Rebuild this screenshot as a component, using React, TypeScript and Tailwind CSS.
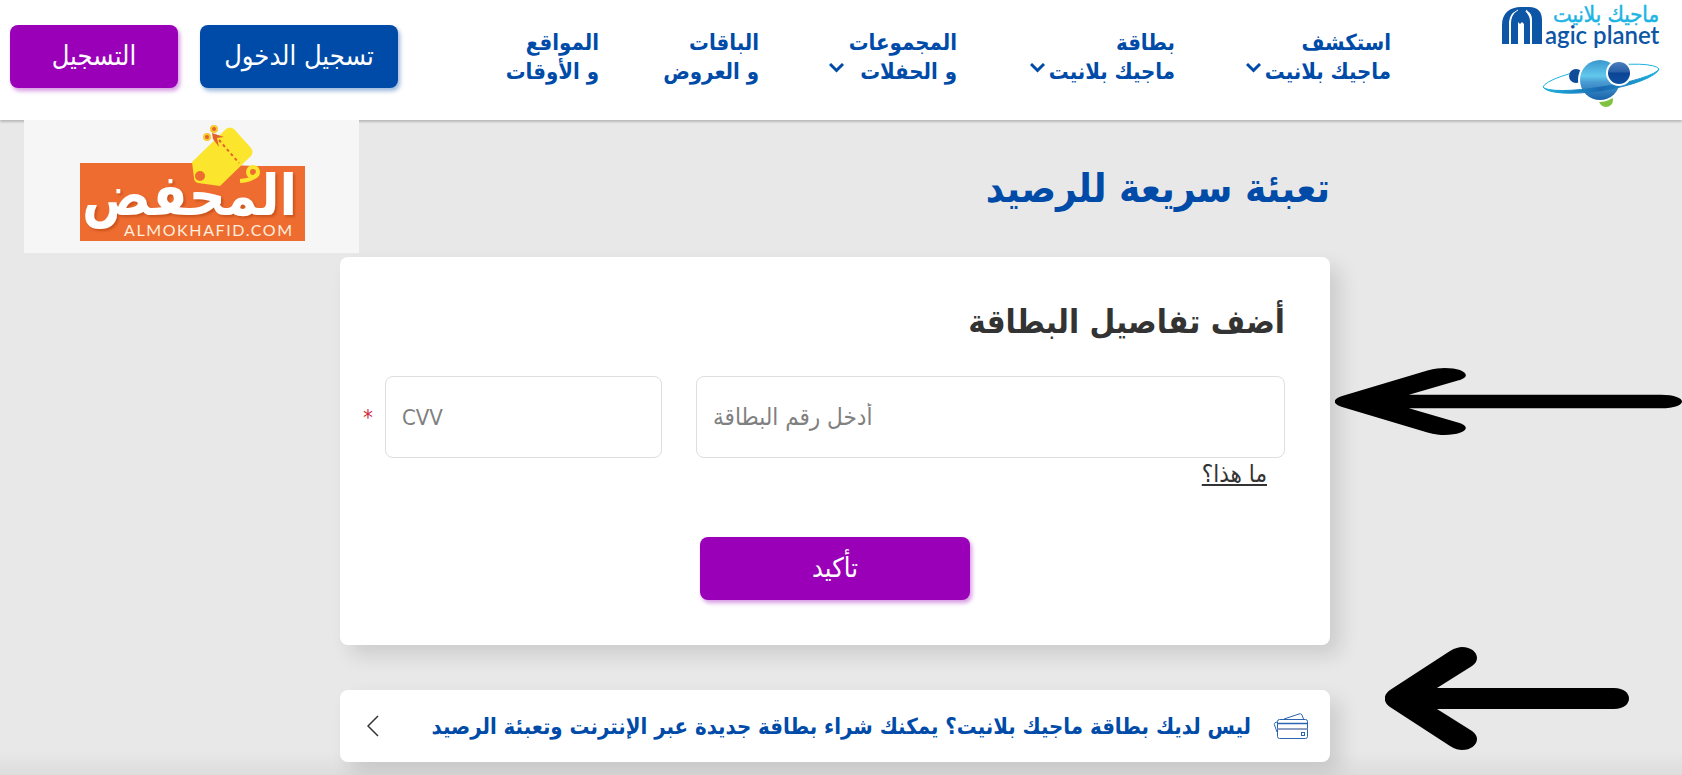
const NAV_ITEMS = [
  { top: 'استكشف', bottom: 'ماجيك بلانيت', width: 'w-[148px]', menu: true, gap: 'gap-1' },
  { top: 'بطاقة', bottom: 'ماجيك بلانيت', width: 'w-[150px]', menu: true, gap: 'gap-1' },
  { top: 'المجموعات', bottom: 'و الحفلات', width: 'w-[130px]', menu: true, gap: 'gap-4' },
  { top: 'الباقات', bottom: 'و العروض', width: 'w-[92px]', menu: false, gap: 'gap-1' },
  { top: 'المواقع', bottom: 'و الأوقات', width: 'w-[94px]', menu: false, gap: 'gap-1' },
];

function MagicPlanetLogo() {
  return (
    <svg width="160" height="108" viewBox="0 0 160 108" role="img" aria-label="Magic Planet">
      <defs>
        <linearGradient id="planet" x1="0" y1="0" x2="0" y2="1">
          <stop offset="0" stopColor="#3a97cf" />
          <stop offset="0.4" stopColor="#62c8ec" />
          <stop offset="0.55" stopColor="#4a9bd3" />
          <stop offset="1" stopColor="#1763a9" />
        </linearGradient>
        <linearGradient id="moon" x1="0" y1="0" x2="0" y2="1">
          <stop offset="0" stopColor="#4a7dbd" />
          <stop offset="0.45" stopColor="#2a5fa8" />
          <stop offset="0.5" stopColor="#0b4595" />
          <stop offset="1" stopColor="#0d4fa1" />
        </linearGradient>
        <linearGradient id="ring" x1="0" y1="0" x2="1" y2="0">
          <stop offset="0" stopColor="#1cb3e0" />
          <stop offset="0.5" stopColor="#1a68b0" />
          <stop offset="1" stopColor="#1cb3e0" />
        </linearGradient>
      </defs>
      <path d="M2 44V25C2 13 10 7 21 7h8c9 0 13 5 13 13v24H32V20c0-6-3-9-7-9 3 3 5 6 5 10v23h-6V24l-2-2-2 2-2-2v22h-7V23c0-5 2-9 5-12-5 2-7 7-7 14v19Z" fill="#0d55a5" />
      <path d="M10 44V24c0-7 3-11 8-14M31 44V20c0-5-2-8-5-10" fill="none" stroke="#fff" strokeWidth="1" />
      <text x="159" y="22" direction="rtl" textAnchor="start" fontSize="22" fill="#1db4e3" stroke="#1db4e3" strokeWidth="0.5" fontFamily="DejaVu Sans Condensed, DejaVu Sans, sans-serif">
        ماجيك بلانيت
      </text>
      <text x="45" y="44" direction="ltr" fontSize="24" fontWeight="600" fill="#0d55a5" fontFamily="Lato, sans-serif">
        agic planet
      </text>
      <path d="M43 87A59 12-9 0 1 159 69" fill="none" stroke="#1cb3e0" strokeWidth="1" />
      <circle cx="76" cy="76" r="7" fill="#0e4b99" />
      <circle cx="106" cy="100" r="7" fill="#7fc241" />
      <circle cx="100" cy="80" r="22" fill="#fff" />
      <circle cx="100" cy="80" r="20" fill="url(#planet)" />
      <path d="M43 87A59 14-9 0 0 159 69A59 10-9 0 1 43 87Z" fill="url(#ring)" stroke="url(#ring)" strokeWidth="1" />
      <circle cx="119" cy="73" r="13" fill="#fff" />
      <circle cx="119" cy="73" r="11" fill="url(#moon)" />
    </svg>
  );
}

function CouponBadge() {
  return (
    <svg width="335" height="133" viewBox="0 0 335 133" role="img" aria-label="Almokhafid" className="block bg-[#f6f6f6]">
      <path d="M56 43h113l60 3h52v75H56Z" fill="#ee6c30" />
      <text
        x="273"
        y="95"
        direction="rtl"
        textAnchor="start"
        fontSize="57"
        fontWeight="700"
        fill="#fff"
        fontFamily="DejaVu Sans Condensed, DejaVu Sans, sans-serif"
        className="drop-shadow-[2px_2px_1px_rgba(170,60,10,0.5)]"
      >
        المحفض
      </text>
      <path d="M168 42 202 9q4-3 8 0l17 19q3 4 0 8l-31 30-22-3q-4-1-4-5Z" fill="#fbe52d" />
      <circle cx="176" cy="56" r="5" fill="#ee6c30" />
      <path d="m195 20 20 23" stroke="#e2642b" strokeWidth="2" strokeDasharray="3 3" />
      <circle cx="190" cy="9" r="3" fill="#e2642b" stroke="#f8c92f" strokeWidth="2" />
      <circle cx="183" cy="17" r="3" fill="#e2642b" stroke="#f8c92f" strokeWidth="2" />
      <path d="m188 13 12 4-7 1 2 9-6-8Z" fill="#e2642b" />
      <circle cx="229" cy="52" r="5" fill="none" stroke="#fbe52d" strokeWidth="4" />
      <path d="M216 61q14-1 18-8" fill="none" stroke="#fbe52d" strokeWidth="4" />
      <text x="100" y="116" direction="ltr" fontSize="16" fill="#ffeede" fontFamily="Lato, sans-serif" className="tracking-widest">
        ALMOKHAFID.COM
      </text>
    </svg>
  );
}

function CardsIcon() {
  return (
    <svg width="36" height="28" viewBox="0 0 36 28" fill="none" stroke="#2b64b0" strokeWidth="1" aria-hidden="true">
      <rect x="4.500" y="7.500" width="30" height="19" rx="2" />
      <path d="M4.500 11.500h30" strokeWidth="1.500" />
      <path d="M4.500 17h30" stroke="#8f9fc4" strokeWidth="2" />
      <rect x="28.500" y="20.500" width="3" height="3" />
      <path d="m11 7 15-5q2-1 3 1l1.500 4M4 10l-2 .7q-1 .6-.6 2L4 20" />
    </svg>
  );
}

function MenuChevron() {
  return (
    <svg width="15" height="10" viewBox="0 0 15 10" fill="none" stroke="currentColor" strokeWidth="3" className="mb-2 shrink-0" aria-hidden="true">
      <path d="m1 1 6.500 6.500L14 1" />
    </svg>
  );
}

function Arrow({ className }: { className: string }) {
  return (
    <svg viewBox="0 0 244 103" preserveAspectRatio="none" aria-hidden="true" className={className}>
      <path d="M5 43 65 4C70 1 74 0 77 0c9 0 15 5 15 11 0 3-2 6-5 8L52 41h177c20 0 20 21 0 21H52l35 22c3 2 5 5 5 8 0 6-6 11-15 11-3 0-7-1-12-4L5 60c-7-5-7-12 0-17Z" />
    </svg>
  );
}

export default function App() {
  return (
    <div dir="rtl" lang="ar" className="flex min-h-screen flex-col bg-[#e8e8e8] font-['DejaVu_Sans_Condensed','DejaVu_Sans',sans-serif]">
      <header className="flex h-[120px] items-center bg-white pr-[22px] pl-[10px] shadow-[0_2px_2px_rgba(0,0,0,0.2)]">
        <a href="#home" className="shrink-0 self-start">
          <MagicPlanetLogo />
        </a>
        <nav className="mr-[109px] flex gap-[68px] pb-[6px] text-[22px] leading-[29px] font-bold whitespace-nowrap text-[#004ba8]">
          {NAV_ITEMS.map((item) => (
            <a key={item.top} href="#menu" className={`${item.width} shrink-0`}>
              <span className="block">{item.top}</span>
              <span className={`flex items-center ${item.gap}`}>
                {item.bottom}
                {item.menu && <MenuChevron />}
              </span>
            </a>
          ))}
        </nav>
        <div className="mr-auto flex shrink-0 gap-[22px] pb-[7px] text-[27px] text-white">
          <button type="button" className="h-[63px] w-[198px] rounded-lg bg-[#004ba8] shadow-[2px_3px_4px_rgba(0,75,168,0.4)]">
            تسجيل الدخول
          </button>
          <button type="button" className="h-[63px] w-[168px] rounded-lg bg-[#9b00b9] shadow-[2px_3px_4px_rgba(155,0,185,0.4)]">
            التسجيل
          </button>
        </div>
      </header>

      <main className="relative flex-1 pt-[40px] pr-3 pb-[13px]">
        <div className="absolute inset-x-0 bottom-0 h-6 bg-linear-to-b from-transparent to-black/5" />
        <div className="absolute top-0 left-6 z-10">
          <CouponBadge />
        </div>

        <div className="relative mx-auto w-full max-w-[990px]">
          <h1 className="text-[40px] leading-[56px] font-bold text-[#004ba8]">تعبئة سريعة للرصيد</h1>

          <form className="mt-[41px] rounded-lg bg-white px-[45px] pt-[41px] pb-[45px] shadow-[10px_10px_20px_rgba(0,0,0,0.12)]">
            <h2 className="text-[33px] leading-[48px] font-bold text-[#333]">أضف تفاصيل البطاقة</h2>
            <div className="mt-[30px] -ml-6 flex items-center">
              <input
                type="text"
                aria-label="أدخل رقم البطاقة"
                placeholder="أدخل رقم البطاقة"
                className="h-[82px] min-w-0 flex-1 rounded-lg border border-[#dedede] px-4 text-left text-[24px] placeholder:text-[#808080]"
              />
              <input
                type="text"
                aria-label="CVV"
                placeholder="CVV"
                className="mr-[34px] h-[82px] w-[277px] rounded-lg border border-[#dedede] px-4 text-left text-[22px] placeholder:text-[#808080]"
              />
              <span className="mr-3 w-3 text-[22px] text-[#d0293b]">*</span>
            </div>
            <a href="#help" className="mr-[18px] block w-fit text-[24px] leading-[32px] text-[#333] underline underline-offset-2">
              ما هذا؟
            </a>
            <button type="button" className="mx-auto mt-[47px] block h-[63px] w-[270px] rounded-lg bg-[#9b00b9] text-[27px] text-white shadow-[2px_3px_4px_rgba(155,0,185,0.4)]">
              تأكيد
            </button>
          </form>

          <a href="#buy" className="mt-[45px] flex h-[72px] items-center rounded-lg bg-white pr-[21px] pl-[27px] shadow-[10px_10px_20px_rgba(0,0,0,0.12)]">
            <CardsIcon />
            <span className="mr-[22px] text-[22px] font-bold whitespace-nowrap text-[#004ba8]">
              ليس لديك بطاقة ماجيك بلانيت؟ يمكنك شراء بطاقة جديدة عبر الإنترنت وتعبئة الرصيد
            </span>
            <svg width="12" height="22" viewBox="0 0 12 22" fill="none" stroke="#333" strokeWidth="1.500" className="mr-auto" aria-hidden="true">
              <path d="M11 1 1 11l10 10" />
            </svg>
          </a>
        </div>

        <Arrow className="absolute top-[248px] right-0 h-[67px] w-[347px]" />
        <Arrow className="absolute top-[527px] right-[53px] h-[103px] w-[244px]" />
      </main>
    </div>
  );
}
